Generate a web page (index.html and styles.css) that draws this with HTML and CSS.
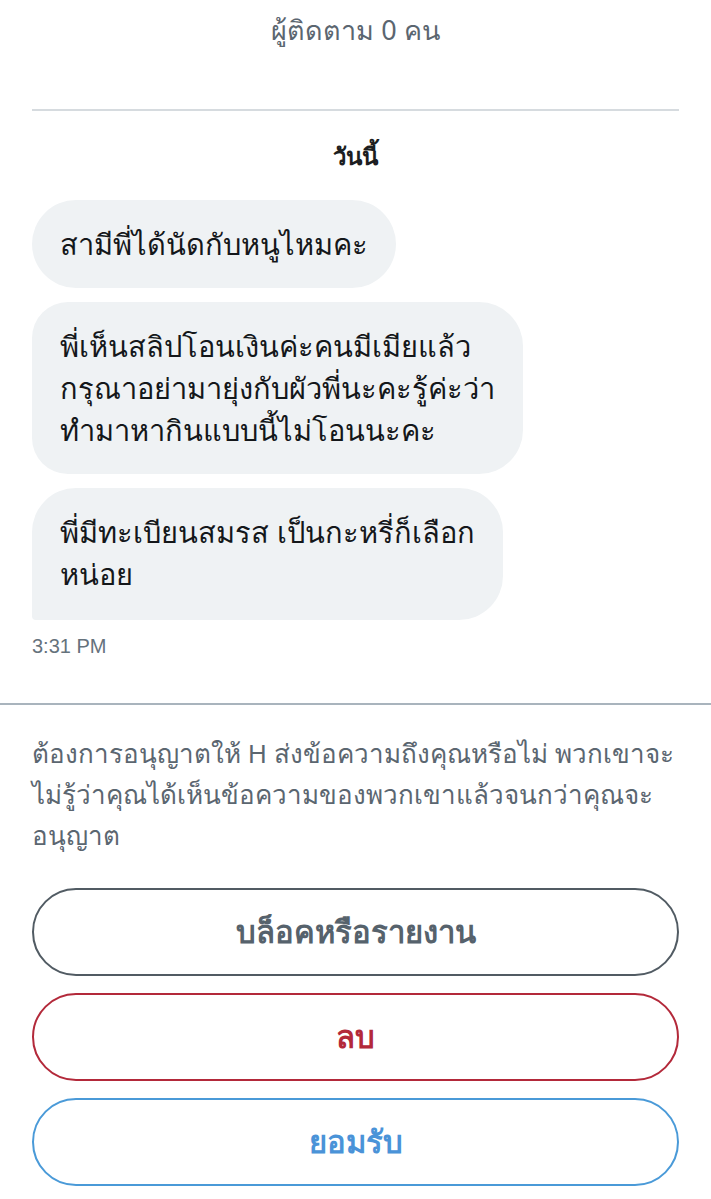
FILE: index.html
```html
<!DOCTYPE html>
<html lang="th">
<head>
    <meta charset="UTF-8">
    <meta name="viewport" content="width=device-width, initial-scale=1.0">
    <title>ข้อความ</title>
    <link rel="stylesheet" href="styles.css">
</head>
<body>
    <div class="header">
        <div class="followers">ผู้ติดตาม 0 คน</div>
    </div>

    <div class="chat">
        <div class="day">วันนี้</div>
        <div class="bubble first">สามีพี่ได้นัดกับหนูไหมคะ</div>
        <div class="bubble middle">พี่เห็นสลิปโอนเงินค่ะคนมีเมียแล้ว<br>กรุณาอย่ามายุ่งกับผัวพี่นะคะรู้ค่ะว่า<br>ทำมาหากินแบบนี้ไม่โอนนะคะ</div>
        <div class="bubble last">พี่มีทะเบียนสมรส เป็นกะหรี่ก็เลือก<br>หน่อย</div>
        <div class="time">3:31 PM</div>
    </div>

    <div class="request">
        <p class="notice">ต้องการอนุญาตให้ H ส่งข้อความถึงคุณหรือไม่ พวกเขาจะ<br>ไม่รู้ว่าคุณได้เห็นข้อความของพวกเขาแล้วจนกว่าคุณจะ<br>อนุญาต</p>
        <button class="btn btn-block">บล็อคหรือรายงาน</button>
        <button class="btn btn-delete">ลบ</button>
        <button class="btn btn-accept">ยอมรับ</button>
    </div>
</body>
</html>
```

FILE: styles.css
```css
* {
    box-sizing: border-box;
}

body {
    margin: 0;
    background: #ffffff;
    font-family: 'Noto Sans', 'DejaVu Sans', sans-serif;
    color: #14171a;
}

.header {
    padding: 0 32px;
}

.followers {
    text-align: center;
    font-size: 27px;
    color: #5b6670;
    line-height: 60px;
    height: 111px;
    border-bottom: 2px solid #d6dbdf;
}

.chat {
    padding: 26px 32px 45px;
    display: flex;
    flex-direction: column;
    align-items: flex-start;
    border-bottom: 2px solid #a9b4bd;
}

.day {
    align-self: center;
    font-weight: bold;
    font-size: 24px;
    color: #1c1e21;
    margin-bottom: 24px;
}

.bubble {
    background: #eff2f4;
    font-size: 29px;
    line-height: 42px;
    padding: 23px 28px;
    border-radius: 44px;
    margin-bottom: 14px;
}

.bubble.middle {
    border-top-left-radius: 36px;
    border-bottom-left-radius: 36px;
}

.bubble.last {
    padding-bottom: 25px;
    border-bottom-left-radius: 4px;
    margin-bottom: 15px;
}

.time {
    font-family: 'Liberation Sans', sans-serif;
    font-size: 20px;
    color: #65727c;
}

.request {
    padding: 28px 32px 16px;
}

.notice {
    margin: 0 0 32px;
    font-size: 26px;
    line-height: 41px;
    color: #5b6670;
    white-space: nowrap;
}

.btn {
    display: block;
    width: 100%;
    height: 88px;
    margin-bottom: 17px;
    background: #ffffff;
    border-radius: 44px;
    border: 2px solid;
    font-family: inherit;
    font-size: 31px;
    font-weight: bold;
    cursor: pointer;
}

.btn-block {
    border-color: #515b63;
    color: #56626c;
}

.btn-delete {
    border-color: #b3293a;
    color: #b3293a;
}

.btn-accept {
    border-color: #4a9ad8;
    color: #4a93d8;
}
```
